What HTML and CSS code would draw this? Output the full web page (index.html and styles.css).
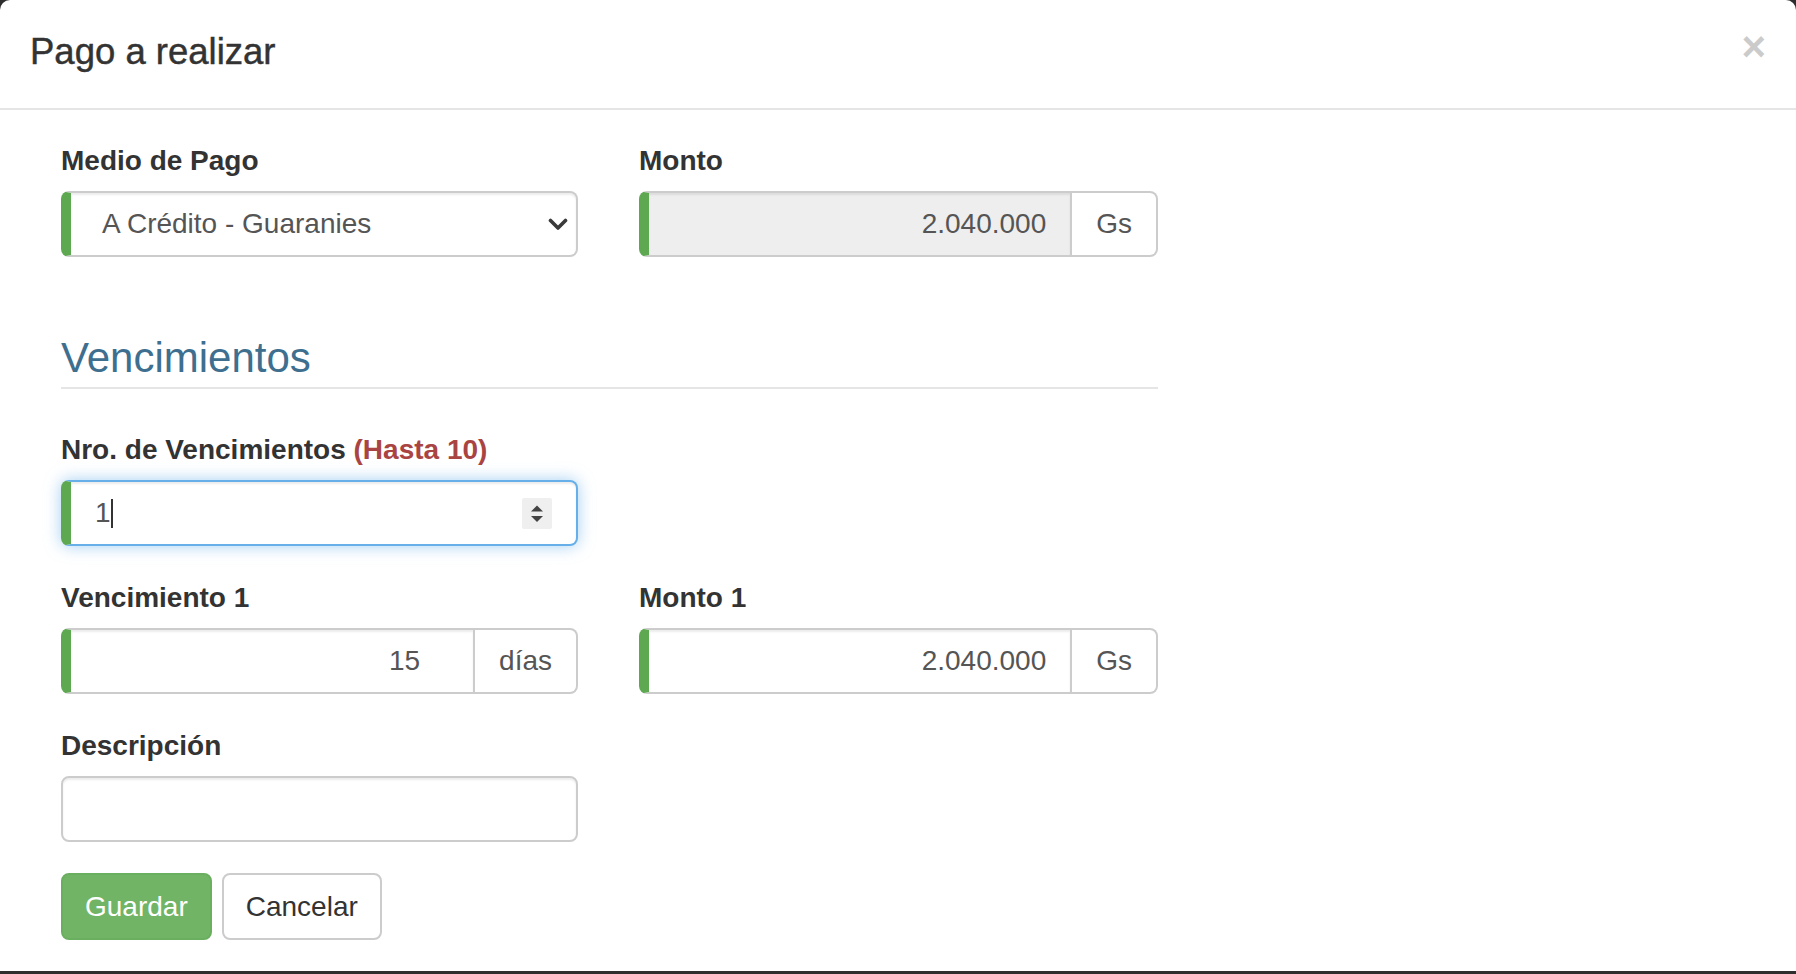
FILE: index.html
```html
<!DOCTYPE html>
<html lang="es">
<head>
<meta charset="utf-8">
<title>Pago a realizar</title>
<link rel="stylesheet" href="styles.css">
</head>
<body>
<div class="modal">
  <div class="modal-header">
    <h4 class="modal-title">Pago a realizar</h4>
    <span class="close">&times;</span>
  </div>
  <div class="modal-body">
    <div class="row">
      <div class="form-group">
        <label>Medio de Pago</label>
        <div class="form-control select-box">
          <span>A Crédito - Guaranies</span>
          <svg class="chevron" width="20" height="13" viewBox="0 0 20 13"><polyline points="2.5,2.5 10,10 17.5,2.5" fill="none" stroke="#3a3a3a" stroke-width="3.6" stroke-linecap="round" stroke-linejoin="round"/></svg>
        </div>
      </div>
      <div class="form-group">
        <label>Monto</label>
        <div class="input-group">
          <div class="form-control readonly right">2.040.000</div>
          <div class="addon">Gs</div>
        </div>
      </div>
    </div>

    <div class="legend">Vencimientos</div>

    <div class="row">
      <div class="form-group">
        <label>Nro. de Vencimientos <span class="danger">(Hasta 10)</span></label>
        <div class="form-control focused">
          <span>1</span><span class="caret"></span>
          <svg class="spinner" width="30" height="31" viewBox="0 0 30 31"><rect x="0" y="0" width="30" height="31" rx="2" fill="#efefef"/><polygon points="9,13.5 21,13.5 15,7.5" fill="#444"/><polygon points="9,18 21,18 15,24" fill="#444"/></svg>
        </div>
      </div>
    </div>

    <div class="row">
      <div class="form-group">
        <label>Vencimiento 1</label>
        <div class="input-group">
          <div class="form-control right num">15</div>
          <div class="addon">días</div>
        </div>
      </div>
      <div class="form-group">
        <label>Monto 1</label>
        <div class="input-group">
          <div class="form-control right">2.040.000</div>
          <div class="addon">Gs</div>
        </div>
      </div>
    </div>

    <div class="row">
      <div class="form-group last">
        <label>Descripción</label>
        <div class="form-control plain"></div>
      </div>
    </div>

    <div class="buttons">
      <button class="btn btn-success">Guardar</button>
      <button class="btn btn-default">Cancelar</button>
    </div>
  </div>
</div>
</body>
</html>
```

FILE: styles.css
```css
* { box-sizing: border-box; }

html, body {
  margin: 0;
  padding: 0;
}

body {
  background: #2e2e2e;
  font-family: "Liberation Sans", Arial, Helvetica, sans-serif;
  color: #333;
  height: 974px;
  overflow: hidden;
}

.modal {
  background: #fff;
  height: 971px;
  border-radius: 10px 10px 0 0;
}

.modal-header {
  display: flex;
  justify-content: space-between;
  align-items: flex-start;
  padding: 26px 30px 30px 30px;
  border-bottom: 2px solid #e5e5e5;
}

.modal-title {
  margin: 0;
  font-size: 36.5px;
  line-height: 52px;
  font-weight: 500;
  color: #333;
  -webkit-text-stroke: 0.45px #333;
}

.close {
  font-size: 42px;
  line-height: 42px;
  font-weight: bold;
  color: #000;
  opacity: 0.2;
  text-shadow: 0 1px 0 #fff;
}

.modal-body {
  padding: 31px 0 0 61px;
}

.row {
  display: grid;
  grid-template-columns: 517px 519px;
  column-gap: 61px;
}

.form-group {
  margin-bottom: 32px;
}

.form-group.last {
  margin-bottom: 31px;
}

label {
  display: block;
  font-size: 28px;
  line-height: 40px;
  font-weight: bold;
  margin-bottom: 10px;
  color: #333;
}

.danger {
  color: #a94442;
}

.form-control {
  display: flex;
  align-items: center;
  height: 66px;
  padding: 0 24px;
  border: 2px solid #ccc;
  border-left: 10px solid #5ea852;
  border-radius: 8px;
  background: #fff;
  font-size: 28px;
  color: #555;
  box-shadow: inset 0 2px 2px rgba(0, 0, 0, 0.075);
}

.form-control.plain {
  border-left: 2px solid #ccc;
}

.select-box {
  padding-left: 31px;
  padding-right: 8px;
  justify-content: space-between;
}

.chevron {
  display: block;
}

.form-control.right {
  justify-content: flex-end;
}

.form-control.num {
  padding-right: 53px;
}

.form-control.readonly {
  background: #eee;
}

.form-control.focused {
  border-color: #66afe9;
  border-left-color: #5ea852;
  box-shadow: inset 0 2px 2px rgba(0, 0, 0, 0.075), 0 0 16px rgba(102, 175, 233, 0.6);
}

.caret {
  display: inline-block;
  width: 2px;
  height: 29px;
  background: #333;
}

.spinner {
  margin-left: auto;
  display: block;
}

.input-group {
  display: flex;
}

.input-group .form-control {
  flex: 1;
  border-radius: 8px 0 0 8px;
}

.addon {
  display: flex;
  align-items: center;
  height: 66px;
  padding: 0 24px;
  border: 2px solid #ccc;
  border-left: 0;
  border-radius: 0 8px 8px 0;
  background: #fff;
  font-size: 28px;
  color: #555;
}

.legend {
  width: 1097px;
  margin-top: 39px;
  margin-bottom: 41px;
  font-size: 42px;
  line-height: 59px;
  color: #3e6f8f;
  border-bottom: 2px solid #e5e5e5;
}

.buttons {
  display: flex;
  gap: 10px;
}

.btn {
  font-family: inherit;
  font-size: 28px;
  line-height: 40px;
  padding: 12px 22px;
  border: 2px solid transparent;
  border-radius: 8px;
  height: 67px;
}

.btn-success {
  background: #71b466;
  border-color: #6aae5f;
  color: #fff;
}

.btn-default {
  background: #fff;
  border-color: #ccc;
  color: #333;
}
```
